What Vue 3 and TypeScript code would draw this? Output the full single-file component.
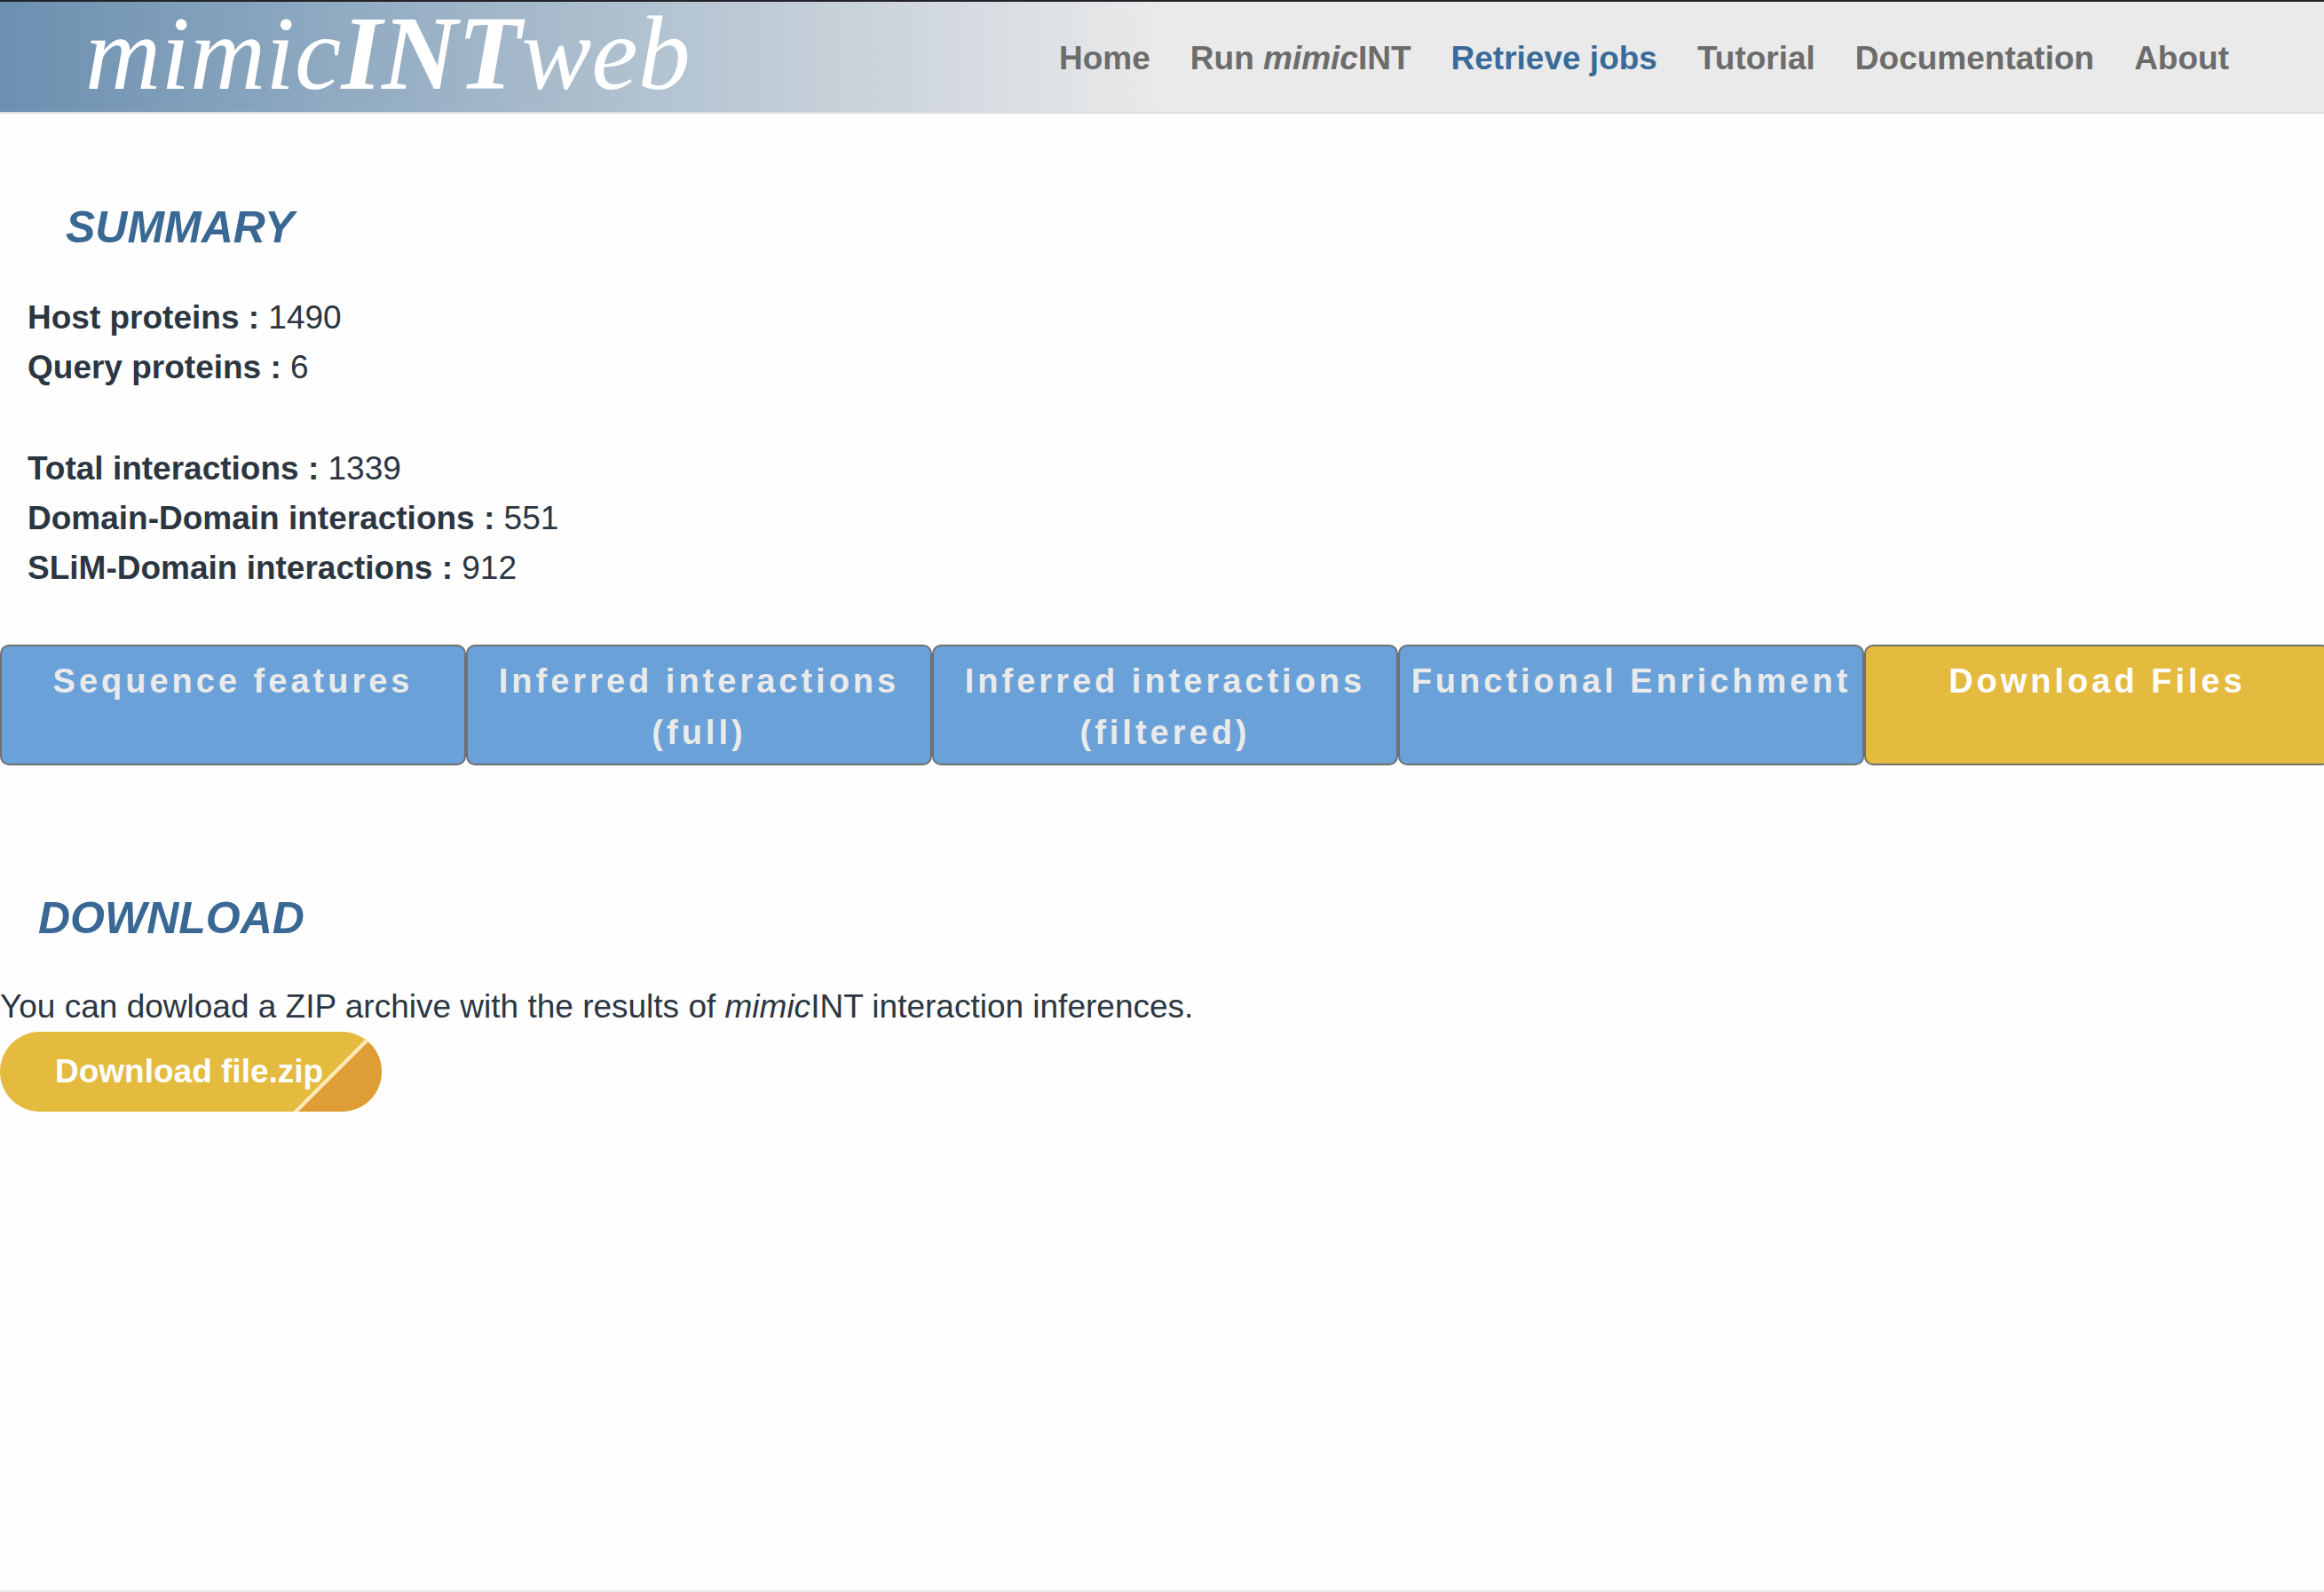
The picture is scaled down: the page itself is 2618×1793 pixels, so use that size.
<script setup lang="ts">
import { ref } from 'vue'

interface Stat {
  label: string
  value: number
}

interface Tab {
  id: string
  label: string
}

const proteinStats: Stat[] = [
  { label: 'Host proteins', value: 1490 },
  { label: 'Query proteins', value: 6 },
]

const interactionStats: Stat[] = [
  { label: 'Total interactions', value: 1339 },
  { label: 'Domain-Domain interactions', value: 551 },
  { label: 'SLiM-Domain interactions', value: 912 },
]

const tabs: Tab[] = [
  { id: 'features', label: 'Sequence features' },
  { id: 'full', label: 'Inferred interactions (full)' },
  { id: 'filtered', label: 'Inferred interactions (filtered)' },
  { id: 'enrichment', label: 'Functional Enrichment' },
  { id: 'download', label: 'Download Files' },
]

const activeTab = ref('download')
</script>

<template>
  <div class="page">
    <header class="header">
      <a class="logo" href="#">mimic<b>INT</b>web</a>
      <nav class="menu">
        <a href="#">Home</a>
        <a href="#">Run <i>mimic</i>INT</a>
        <a href="#" class="current">Retrieve jobs</a>
        <a href="#">Tutorial</a>
        <a href="#">Documentation</a>
        <a href="#">About</a>
      </nav>
    </header>

    <main>
      <section class="summary">
        <h2>SUMMARY</h2>
        <div class="stats">
          <p v-for="stat in proteinStats" :key="stat.label">
            <strong>{{ stat.label }} :</strong> {{ stat.value }}
          </p>
        </div>
        <div class="stats">
          <p v-for="stat in interactionStats" :key="stat.label">
            <strong>{{ stat.label }} :</strong> {{ stat.value }}
          </p>
        </div>
      </section>

      <div class="tabs" role="tablist">
        <button
          v-for="tab in tabs"
          :key="tab.id"
          type="button"
          role="tab"
          class="tab"
          :class="{ active: tab.id === activeTab }"
          :aria-selected="tab.id === activeTab"
          @click="activeTab = tab.id"
        >
          {{ tab.label }}
        </button>
      </div>

      <section class="download">
        <h2>DOWNLOAD</h2>
        <p>
          You can dowload a ZIP archive with the results of <i>mimic</i>INT interaction inferences.
        </p>
        <button type="button" class="download-button">Download file.zip</button>
      </section>
    </main>
  </div>
</template>

<style>
body {
  margin: 0;
  background: #fefefe;
}
</style>

<style scoped>
.page {
  box-sizing: border-box;
  min-height: 100vh;
  border-top: 2px solid #232228;
  border-bottom: 2px solid #e8e8e8;
  color: #2c3641;
  font-family: "Liberation Sans", Arial, sans-serif;
  font-size: 37px;
  line-height: 56px;
}

.header {
  display: flex;
  align-items: flex-start;
  justify-content: space-between;
  height: 124px;
  padding: 0 107px 0 96px;
  border-bottom: 2px solid #dedede;
  background: linear-gradient(to right, #6b90b0, #eaeaea 50%);
}

.logo {
  color: #fff;
  font-family: "Liberation Serif", Georgia, serif;
  font-size: 118px;
  font-style: italic;
  line-height: 118px;
  text-decoration: none;
}

.menu {
  display: flex;
  gap: 45px;
  padding-top: 36px;
}

.menu a {
  color: #6c6c6c;
  font-weight: bold;
  text-decoration: none;
  white-space: nowrap;
}

.menu a.current {
  color: #3a6a9a;
}

main {
  overflow: hidden;
}

h2 {
  margin: 0;
  color: #3a6894;
  font-size: 50px;
  font-style: italic;
  line-height: 60px;
}

p {
  margin: 0;
}

.summary {
  padding: 98px 31px 0;
}

.summary h2 {
  padding: 0 43px;
  margin-bottom: 44px;
}

.stats + .stats {
  margin-top: 58px;
}

/* The row runs slightly past the right edge of the window */
.tabs {
  display: grid;
  grid-template-columns: repeat(5, 1fr);
  margin: 58px -7px 0 0;
}

.tab {
  display: flex;
  justify-content: center;
  box-sizing: border-box;
  padding: 10px 8px 6px;
  border: 2px solid #6f7072;
  border-radius: 10px;
  background: #69a1d8;
  color: #eaeaea;
  font-family: inherit;
  font-size: 38px;
  font-weight: bold;
  letter-spacing: 4px;
  line-height: 58px;
}

.tab.active {
  background: #e4ba3f;
  color: #fff;
}

.download {
  padding-top: 142px;
}

.download h2 {
  padding: 0 43px;
  margin-bottom: 42px;
}

.download-button {
  position: relative;
  overflow: hidden;
  height: 90px;
  padding: 0 66px 0 62px;
  border: 0;
  border-radius: 45px;
  background: #e4ba3f;
  color: #fff;
  font: inherit;
  font-weight: bold;
}

/* Folded corner drawn over the label */
.download-button::after {
  content: "";
  position: absolute;
  inset: 0;
  background: linear-gradient(315deg, #df9e35 66px, #fbecbc 67px, #fbecbc 70px, transparent 71px);
}
</style>
